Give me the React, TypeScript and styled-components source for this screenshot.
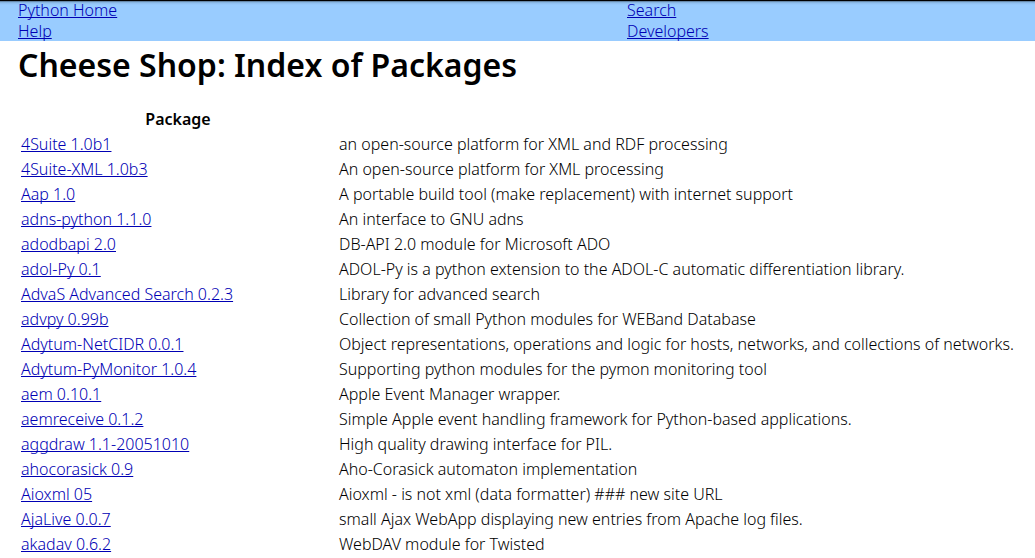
import React from 'react';
import styled, { createGlobalStyle } from 'styled-components';

const GlobalStyle = createGlobalStyle`
  body {
    margin: 0;
    background: #fff;
    color: #000;
    font-family: 'Noto Sans', 'Open Sans', sans-serif;
    font-size: 16px;
    font-weight: 300;
    line-height: 21px;
  }
`;

const Link = styled.a`
  color: #0000b4;
  text-decoration: underline;
  text-decoration-thickness: 1px;
  text-underline-offset: 1px;
  text-decoration-skip-ink: none;
`;

const NavBar = styled.nav`
  display: grid;
  grid-template-columns: 3fr 2fr;
  grid-auto-rows: 20px;
  row-gap: 1px;
  padding: 0 2px 0 18px;
  line-height: 20px;
  background: #99ccff linear-gradient(#000 0, #000 1px, #4d6680 1px, #7fabd5 2px, #8fbfef 3px, #99ccff 5px);
`;

const Content = styled.main`
  padding: 3px 8px 0 18px;
`;

const Title = styled.h1`
  margin: 0 0 20px;
  font-size: 32px;
  line-height: 42px;
  font-weight: 600;
`;

const PackageTable = styled.table`
  width: 100%;
  table-layout: fixed;
  border-spacing: 2px;
`;

const NameColumn = styled.col`
  width: 316px;
`;

const HeadCell = styled.th`
  padding: 1px;
  font-weight: 600;
  text-align: center;
`;

const Cell = styled.td`
  padding: 1px;
  white-space: nowrap;
`;

const navLinks = ['Python Home', 'Search', 'Help', 'Developers'];

const packages: [string, string][] = [
  ['4Suite 1.0b1', 'an open-source platform for XML and RDF processing'],
  ['4Suite-XML 1.0b3', 'An open-source platform for XML processing'],
  ['Aap 1.0', 'A portable build tool (make replacement) with internet support'],
  ['adns-python 1.1.0', 'An interface to GNU adns'],
  ['adodbapi 2.0', 'DB-API 2.0 module for Microsoft ADO'],
  ['adol-Py 0.1', 'ADOL-Py is a python extension to the ADOL-C automatic differentiation library.'],
  ['AdvaS Advanced Search 0.2.3', 'Library for advanced search'],
  ['advpy 0.99b', 'Collection of small Python modules for WEBand Database'],
  ['Adytum-NetCIDR 0.0.1', 'Object representations, operations and logic for hosts, networks, and collections of networks.'],
  ['Adytum-PyMonitor 1.0.4', 'Supporting python modules for the pymon monitoring tool'],
  ['aem 0.10.1', 'Apple Event Manager wrapper.'],
  ['aemreceive 0.1.2', 'Simple Apple event handling framework for Python-based applications.'],
  ['aggdraw 1.1-20051010', 'High quality drawing interface for PIL.'],
  ['ahocorasick 0.9', 'Aho-Corasick automaton implementation'],
  ['Aioxml 05', 'Aioxml - is not xml (data formatter) ### new site URL'],
  ['AjaLive 0.0.7', 'small Ajax WebApp displaying new entries from Apache log files.'],
  ['akadav 0.6.2', 'WebDAV module for Twisted'],
];

export default function App() {
  return (
    <>
      <GlobalStyle />
      <NavBar>
        {navLinks.map((label) => (
          <div key={label}>
            <Link href="#">{label}</Link>
          </div>
        ))}
      </NavBar>
      <Content>
        <Title>Cheese Shop: Index of Packages</Title>
        <PackageTable>
          <colgroup>
            <NameColumn />
            <col />
          </colgroup>
          <thead>
            <tr>
              <HeadCell scope="col">Package</HeadCell>
              <td />
            </tr>
          </thead>
          <tbody>
            {packages.map(([name, summary]) => (
              <tr key={name}>
                <Cell>
                  <Link href="#">{name}</Link>
                </Cell>
                <Cell>{summary}</Cell>
              </tr>
            ))}
          </tbody>
        </PackageTable>
      </Content>
    </>
  );
}
